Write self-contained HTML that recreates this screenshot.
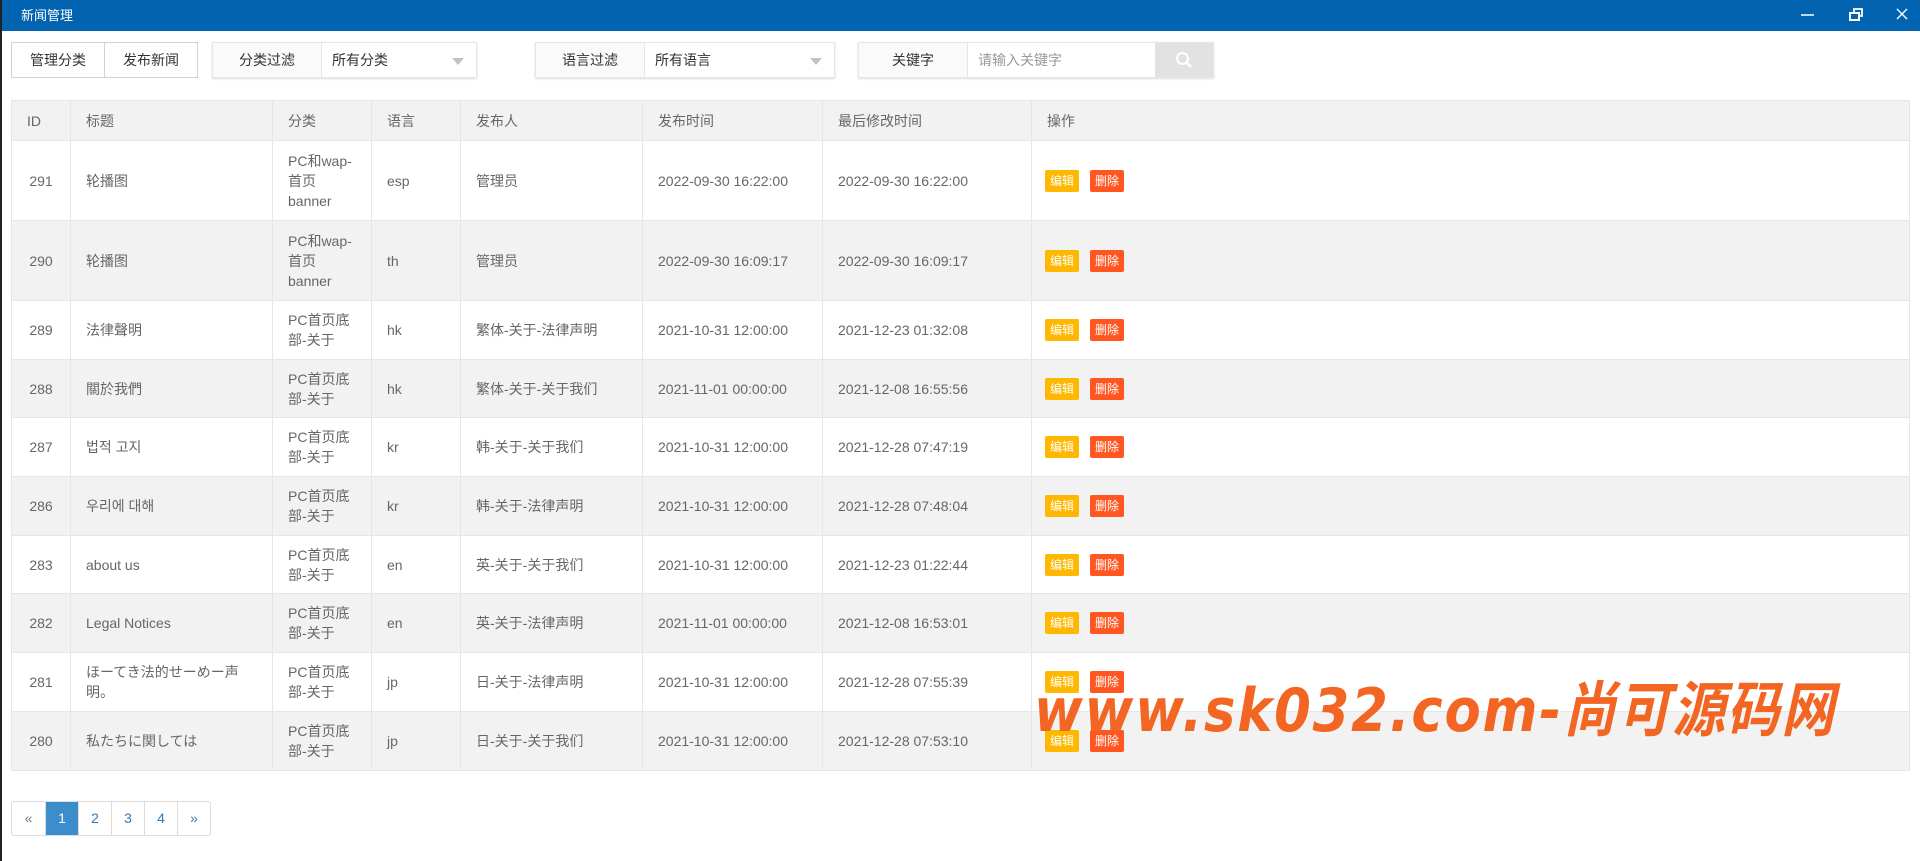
<!DOCTYPE html>
<html><head><meta charset="utf-8"><style>
*{margin:0;padding:0;box-sizing:border-box}
body{width:1920px;height:861px;overflow:hidden;background:#fff;font-family:"Liberation Sans","Noto Sans CJK SC",sans-serif;font-size:14px;color:#666;position:relative}
.edge{position:absolute;left:0;top:0;width:2px;height:861px;background:#222}
.bar{position:absolute;left:0;top:0;width:1920px;height:31px;background:#0263b1;color:#fff;font-size:13px;line-height:31px;padding-left:21px}
.ctl{position:absolute;top:0;height:31px}
.box{position:absolute;top:42px;height:36px;border:1px solid #e6e6e6;display:flex;align-items:center;box-shadow:0 1px 2px #ddd}
.box span{display:flex;align-items:center;height:100%;padding:0 10px}
.lbl{justify-content:center;border-right:1px solid #e6e6e6;background:#fafafa;color:#333}
.sel{color:#333}
.tri{position:absolute;right:12px;top:15px;width:0;height:0;border-left:6px solid transparent;border-right:6px solid transparent;border-top:7px solid #c2c2c2}
table{position:absolute;left:11px;top:100px;width:1899px;border-collapse:collapse}
td,th{border:1px solid #e6e6e6;text-align:left;padding:0 15px;font-weight:normal;line-height:20px}
th{height:40px;background:#f2f2f2;color:#666}
tr.e td{background:#f2f2f2}
tr.t td{height:80px}
tr.n td{height:58.7px}
td.id{text-align:center;padding:0 8px}
.b{display:inline-block;width:34px;height:22px;line-height:22px;text-align:center;color:#fff;font-size:12px;border-radius:2px;margin-right:13px;margin-left:-2px}
.y{background:#ffb800}.r{background:#ff5722}
.pg{position:absolute;left:11px;top:801px;display:flex;border:1px solid #ddd;border-radius:3px;overflow:hidden}
.pg span{width:33px;height:33px;line-height:33px;text-align:center;border-left:1px solid #ddd;color:#337ab7;font-size:14px}
.pg span:first-child{border-left:none;color:#777}
.pg .a{background:#3c8dcc;color:#fff}
.wm{position:absolute;left:1034px;top:676px;font-size:60px;font-weight:bold;color:#f26522;font-style:italic;letter-spacing:2px;white-space:nowrap;line-height:70px;font-family:"DejaVu Sans","Noto Sans CJK SC",sans-serif;transform:scaleX(0.88);transform-origin:left}
</style></head><body>
<div class="bar">新闻管理</div>
<div class="edge"></div>
<svg class="ctl" style="left:1780px" width="140" height="31"><line x1="21" y1="15" x2="34" y2="15" stroke="#fff" stroke-width="1.5"/><rect x="70" y="13" width="9" height="7" fill="none" stroke="#fff" stroke-width="2"/><path d="M74 13V9h8v7h-3" fill="none" stroke="#fff" stroke-width="1.8"/><path d="M117 9l10 10M127 9l-10 10" stroke="#fff" stroke-width="1.4"/></svg>
<div class="box" style="left:11px;width:187px;box-shadow:none;border-color:#d2d2d2"><span style="width:93px;justify-content:center;border-right:1px solid #d2d2d2;color:#333">管理分类</span><span style="flex:1;justify-content:center;color:#333">发布新闻</span></div>
<div class="box" style="left:212px;width:265px"><span class="lbl" style="width:109px">分类过滤</span><span class="sel">所有分类</span><i class="tri"></i></div>
<div class="box" style="left:535px;width:300px"><span class="lbl" style="width:109px">语言过滤</span><span class="sel">所有语言</span><i class="tri"></i></div>
<div class="box" style="left:858px;width:356px"><span class="lbl" style="width:109px">关键字</span><span style="color:#999;flex:1">请输入关键字</span><span style="width:58px;background:#e2e2e2;justify-content:center"><svg width="18" height="18"><circle cx="7.5" cy="7.5" r="5.5" fill="none" stroke="#fff" stroke-width="2"/><line x1="11.5" y1="11.5" x2="16" y2="16" stroke="#fff" stroke-width="2.5"/></svg></span></div>
<table>
<tr><th style="width:59px">ID</th><th style="width:202px">标题</th><th style="width:99px">分类</th><th style="width:89px">语言</th><th style="width:182px">发布人</th><th style="width:180px">发布时间</th><th style="width:209px">最后修改时间</th><th>操作</th></tr>
<tr class="t"><td class="id">291</td><td>轮播图</td><td>PC和wap-首页banner</td><td>esp</td><td>管理员</td><td>2022-09-30 16:22:00</td><td>2022-09-30 16:22:00</td><td><span class="b y">编辑</span><span class="b r">删除</span></td></tr>
<tr class="t e"><td class="id">290</td><td>轮播图</td><td>PC和wap-首页banner</td><td>th</td><td>管理员</td><td>2022-09-30 16:09:17</td><td>2022-09-30 16:09:17</td><td><span class="b y">编辑</span><span class="b r">删除</span></td></tr>
<tr class="n"><td class="id">289</td><td>法律聲明</td><td>PC首页底部-关于</td><td>hk</td><td>繁体-关于-法律声明</td><td>2021-10-31 12:00:00</td><td>2021-12-23 01:32:08</td><td><span class="b y">编辑</span><span class="b r">删除</span></td></tr>
<tr class="n e"><td class="id">288</td><td>關於我們</td><td>PC首页底部-关于</td><td>hk</td><td>繁体-关于-关于我们</td><td>2021-11-01 00:00:00</td><td>2021-12-08 16:55:56</td><td><span class="b y">编辑</span><span class="b r">删除</span></td></tr>
<tr class="n"><td class="id">287</td><td>법적 고지</td><td>PC首页底部-关于</td><td>kr</td><td>韩-关于-关于我们</td><td>2021-10-31 12:00:00</td><td>2021-12-28 07:47:19</td><td><span class="b y">编辑</span><span class="b r">删除</span></td></tr>
<tr class="n e"><td class="id">286</td><td>우리에 대해</td><td>PC首页底部-关于</td><td>kr</td><td>韩-关于-法律声明</td><td>2021-10-31 12:00:00</td><td>2021-12-28 07:48:04</td><td><span class="b y">编辑</span><span class="b r">删除</span></td></tr>
<tr class="n"><td class="id">283</td><td>about us</td><td>PC首页底部-关于</td><td>en</td><td>英-关于-关于我们</td><td>2021-10-31 12:00:00</td><td>2021-12-23 01:22:44</td><td><span class="b y">编辑</span><span class="b r">删除</span></td></tr>
<tr class="n e"><td class="id">282</td><td>Legal Notices</td><td>PC首页底部-关于</td><td>en</td><td>英-关于-法律声明</td><td>2021-11-01 00:00:00</td><td>2021-12-08 16:53:01</td><td><span class="b y">编辑</span><span class="b r">删除</span></td></tr>
<tr class="n"><td class="id">281</td><td>ほーてき法的せーめー声明。</td><td>PC首页底部-关于</td><td>jp</td><td>日-关于-法律声明</td><td>2021-10-31 12:00:00</td><td>2021-12-28 07:55:39</td><td><span class="b y">编辑</span><span class="b r">删除</span></td></tr>
<tr class="n e"><td class="id">280</td><td>私たちに関しては</td><td>PC首页底部-关于</td><td>jp</td><td>日-关于-关于我们</td><td>2021-10-31 12:00:00</td><td>2021-12-28 07:53:10</td><td><span class="b y">编辑</span><span class="b r">删除</span></td></tr>
</table>
<div class="pg"><span>«</span><span class="a">1</span><span>2</span><span>3</span><span>4</span><span>»</span></div>
<div class="wm">www.sk032.com-尚可源码网</div>
</body></html>
